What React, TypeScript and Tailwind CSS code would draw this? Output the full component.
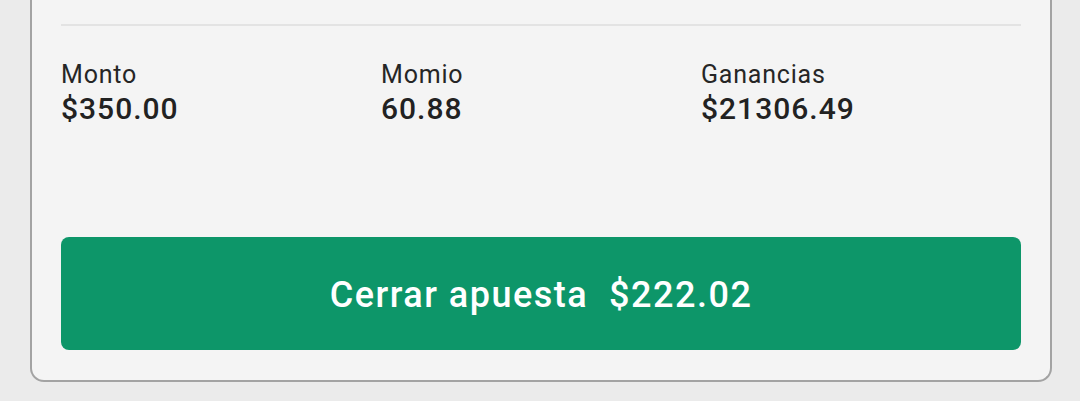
export default function App() {
  const stats = [
    { label: 'Monto', value: '$350.00' },
    { label: 'Momio', value: '60.88' },
    { label: 'Ganancias', value: '$21306.49' },
  ]

  return (
    <div className="h-[401px] w-[1080px] bg-[#ebebeb] pl-[30px] font-['Roboto',sans-serif]">
      <div className="w-[1022px] rounded-b-[14px] border-x-2 border-b-2 border-[#a3a3a3] bg-[#f4f4f4] px-[29px] pt-[24px] pb-[30px]">
        <div className="h-[2px] bg-[#e3e3e3]" />
        <div className="mt-[34px] grid grid-cols-3">
          {stats.map((s) => (
            <div key={s.label} className="flex flex-col">
              <span className="text-[25px] leading-[30px] tracking-[0.8px] text-[#262626]">{s.label}</span>
              <span className="mt-[2px] text-[30px] font-medium leading-[34px] tracking-[1px] text-[#222222]">
                {s.value}
              </span>
            </div>
          ))}
        </div>
        <button className="mt-[111px] flex h-[113px] w-full items-center justify-center rounded-[8px] bg-[#0d9669] pt-[2px] text-[36px] font-medium tracking-[1.5px] text-white">
          Cerrar apuesta&nbsp;&nbsp;$222.02
        </button>
      </div>
    </div>
  )
}
